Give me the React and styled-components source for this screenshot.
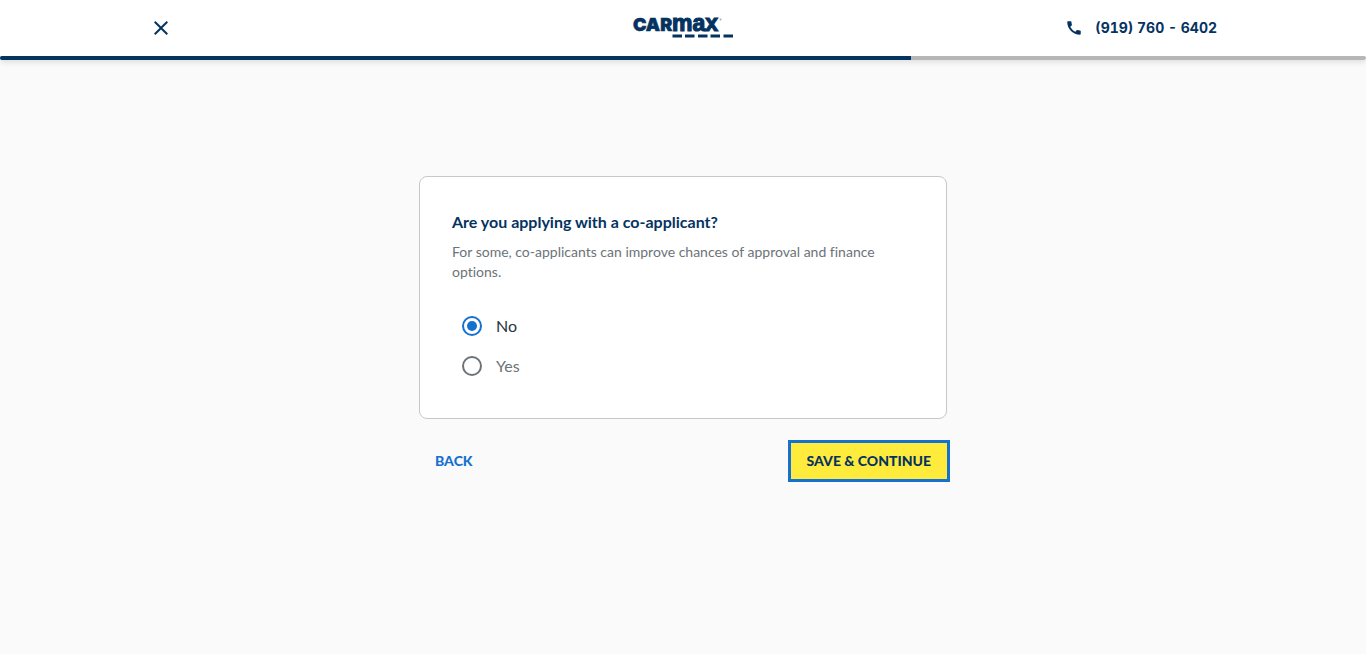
import React, { useState } from "react";
import styled, { createGlobalStyle } from "styled-components";

const navy = "#053361";
const blue = "#1571d0";

const GlobalStyle = createGlobalStyle`
  *, *::before, *::after { box-sizing: border-box; }
  body {
    margin: 0;
    background: #fafafa;
    font-family: Lato, "Open Sans", sans-serif;
    font-variant-ligatures: none;
  }
`;

const Header = styled.header`
  background: #fff;
  box-shadow: 0 2px 6px rgba(0, 0, 0, 0.12);
`;

const HeaderInner = styled.div`
  display: grid;
  grid-template-columns: 1fr auto 1fr;
  align-items: center;
  height: 56px;
  max-width: 1068px;
  margin: 0 auto;
`;

const CloseButton = styled.button`
  display: flex;
  justify-self: start;
  padding: 0;
  border: 0;
  background: none;
  cursor: pointer;
`;

const LogoLink = styled.a`
  display: flex;
  color: ${navy};
`;

const PhoneLink = styled.a`
  display: flex;
  align-items: center;
  justify-self: end;
  gap: 12px;
  color: ${navy};
  font: 700 14px/20px Inter, sans-serif;
  font-variant-numeric: tabular-nums;
  text-decoration: none;
`;

const ProgressTrack = styled.div`
  height: 4px;
  border-radius: 2px;
  background: #b4b6b8;
  overflow: hidden;
`;

const ProgressFill = styled.div`
  height: 100%;
  background: ${navy};
`;

const Main = styled.main`
  max-width: 528px;
  margin: 116px auto 0;
  padding-bottom: 64px;
`;

const Card = styled.fieldset`
  min-width: 0;
  margin: 0;
  padding: 32px;
  border: 1px solid #c5c7c9;
  border-radius: 8px;
  background: #fff;
`;

const Title = styled.h1`
  margin: 0 0 8px;
  color: ${navy};
  font-size: 16px;
  font-weight: 700;
  line-height: 25px;
`;

const Description = styled.p`
  margin: 0 0 24px;
  color: #6c7379;
  font-size: 14px;
  line-height: 20px;
`;

const Option = styled.label`
  display: flex;
  align-items: center;
  gap: 14px;
  height: 40px;
  padding-left: 10px;
  color: ${(p) => (p.$selected ? "#2a343d" : "#6c7379")};
  font-size: 16px;
  line-height: 24px;
  cursor: pointer;
`;

const Radio = styled.input`
  appearance: none;
  display: grid;
  place-items: center;
  width: 20px;
  height: 20px;
  margin: 0;
  border: 2px solid #6c7379;
  border-radius: 50%;

  &:checked { border-color: ${blue}; }
  &:checked::before {
    content: "";
    width: 10px;
    height: 10px;
    border-radius: 50%;
    background: ${blue};
  }
`;

const Actions = styled.div`
  display: flex;
  justify-content: space-between;
  margin-top: 24px;
`;

const Button = styled.button`
  height: 36px;
  padding: 0 16px;
  border: 0;
  background: ${(p) => (p.$primary ? "#ffeb3b" : "transparent")};
  color: ${(p) => (p.$primary ? navy : blue)};
  outline: ${(p) => (p.$primary ? `3px solid ${blue}` : "none")};
  font: 900 14px/20px Lato, sans-serif;
  cursor: pointer;
`;

function Logo() {
  return (
    <svg width="102" height="44" viewBox="0 0 102 44" fill="currentColor" role="img" aria-label="CarMax">
      <text x="1" y="25" fontFamily="Inter, sans-serif" fontWeight="900" fontSize="18" stroke="currentColor" strokeWidth="0.6">CAR</text>
      <text x="40" y="25" fontFamily="Liberation Sans, sans-serif" fontWeight="700" fontSize="23" stroke="currentColor" strokeWidth="1.2">max</text>
      <circle cx="88.500" cy="13.500" r="1" fillOpacity="0.4" />
      <path d="M40.500 28.500h9.500v3h-9.500zM53 28.500h9.500v3h-9.500zM66 28.500h9.500v3h-9.500zM78.500 28.500h9.500v3h-9.500zM91.500 28.500h9.500v3h-9.500z" />
    </svg>
  );
}

const options = ["No", "Yes"];

export default function App() {
  const [answer, setAnswer] = useState("No");
  return (
    <>
      <GlobalStyle />
      <Header>
        <HeaderInner>
          <CloseButton type="button" aria-label="Close">
            <svg width="24" height="24" viewBox="0 0 24 24" fill={navy}>
              <path d="M19 6.410 17.590 5 12 10.590 6.410 5 5 6.410 10.590 12 5 17.590 6.410 19 12 13.410 17.590 19 19 17.590 13.410 12z" />
            </svg>
          </CloseButton>
          <LogoLink href="#" aria-label="CarMax home"><Logo /></LogoLink>
          <PhoneLink href="tel:9197606402">
            <svg width="18" height="18" viewBox="0 0 24 24" fill="currentColor" aria-hidden="true">
              <path d="M20.010 15.380c-1.230 0-2.420-.2-3.530-.56-.35-.12-.74-.03-1.010.24l-1.570 1.970c-2.830-1.350-5.480-3.900-6.890-6.830l1.950-1.660c.27-.28.35-.67.24-1.020-.37-1.110-.56-2.300-.56-3.530 0-.54-.45-.99-.99-.99H4.190C3.650 3 3 3.240 3 3.990 3 13.280 10.730 21 20.010 21c.71 0 .99-.63.99-1.180v-3.450c0-.54-.45-.99-.99-.99z" />
            </svg>
            (919) 760 - 6402
          </PhoneLink>
        </HeaderInner>
        <ProgressTrack role="progressbar" aria-label="Application progress" aria-valuenow={67}>
          <ProgressFill style={{ width: `${(2 / 3) * 100}%` }} />
        </ProgressTrack>
      </Header>
      <Main>
        <Card aria-labelledby="question">
          <Title id="question">Are you applying with a co-applicant?</Title>
          <Description>
            For some, co-applicants can improve chances of approval and finance options.
          </Description>
          {options.map((option) => (
            <Option key={option} $selected={answer === option}>
              <Radio
                type="radio"
                name="coapplicant"
                value={option}
                checked={answer === option}
                onChange={() => setAnswer(option)}
              />
              {option}
            </Option>
          ))}
        </Card>
        <Actions>
          <Button type="button">BACK</Button>
          <Button type="button" $primary>SAVE &amp; CONTINUE</Button>
        </Actions>
      </Main>
    </>
  );
}
